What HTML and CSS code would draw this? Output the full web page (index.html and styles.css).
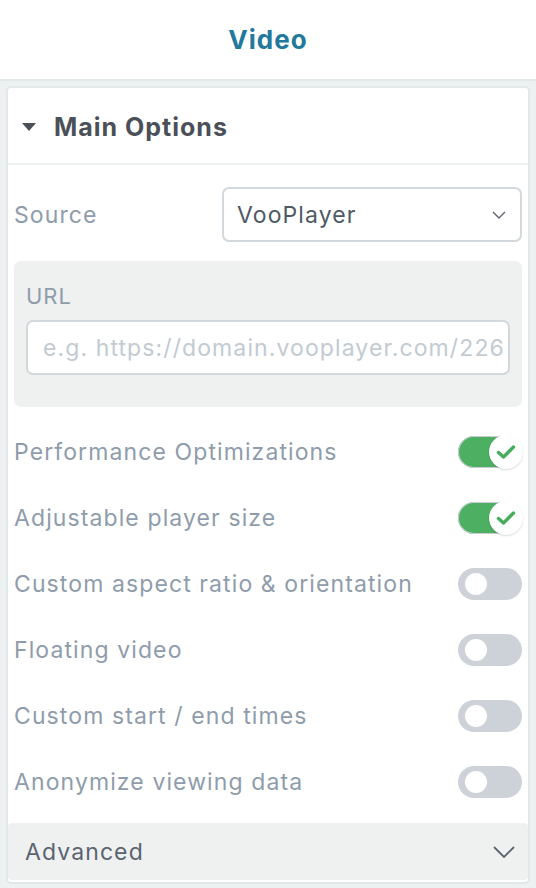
FILE: index.html
```html
<!DOCTYPE html>
<html>
<head>
<meta charset="utf-8">
<link rel="stylesheet" href="styles.css">
</head>
<body>
<div class="page">
  <header class="topbar"><h1 class="title">Video</h1></header>
  <main class="panel">
    <section class="card">
      <div class="card-head">
        <svg class="caret" width="16" height="10" viewBox="0 0 16 10"><path d="M1 1 H15 L8 9 Z" fill="#4b5058"/></svg>
        <h2 class="card-title">Main Options</h2>
      </div>
      <div class="card-body">
        <div class="row source-row">
          <span class="label">Source</span>
          <div class="select">
            <span class="select-value">VooPlayer</span>
            <svg width="14" height="8" viewBox="0 0 14 8"><path d="M1 1 L7 7 L13 1" fill="none" stroke="#5b6470" stroke-width="1.4"/></svg>
          </div>
        </div>
        <div class="url-box">
          <div class="url-label">URL</div>
          <div class="input"><span class="placeholder">e.g. https://domain.vooplayer.com/226</span></div>
        </div>
        <div class="toggles">
          <div class="row toggle-row"><span class="label">Performance Optimizations</span><span class="switch on"><span class="knob"><svg width="20" height="16" viewBox="0 0 20 16"><path d="M2.5 8.5 L7.5 13 L17.5 3" fill="none" stroke="#45ad5c" stroke-width="3.4" stroke-linecap="round" stroke-linejoin="round"/></svg></span></span></div>
          <div class="row toggle-row"><span class="label">Adjustable player size</span><span class="switch on"><span class="knob"><svg width="20" height="16" viewBox="0 0 20 16"><path d="M2.5 8.5 L7.5 13 L17.5 3" fill="none" stroke="#45ad5c" stroke-width="3.4" stroke-linecap="round" stroke-linejoin="round"/></svg></span></span></div>
          <div class="row toggle-row"><span class="label">Custom aspect ratio &amp; orientation</span><span class="switch"><span class="knob"></span></span></div>
          <div class="row toggle-row"><span class="label">Floating video</span><span class="switch"><span class="knob"></span></span></div>
          <div class="row toggle-row"><span class="label">Custom start / end times</span><span class="switch"><span class="knob"></span></span></div>
          <div class="row toggle-row"><span class="label">Anonymize viewing data</span><span class="switch"><span class="knob"></span></span></div>
        </div>
      </div>
      <div class="advanced">
        <span class="adv-label">Advanced</span>
        <svg width="22" height="12" viewBox="0 0 22 12"><path d="M1 1 L11 11 L21 1" fill="none" stroke="#5b6470" stroke-width="1.8"/></svg>
      </div>
    </section>
  </main>
</div>
</body>
</html>
```
FILE: styles.css
```css
* { box-sizing: border-box; }
html, body { margin: 0; padding: 0; }
body {
  font-family: Inter, "Noto Sans", "Liberation Sans", sans-serif;
  background: #eef1f1;
  width: 536px;
  height: 888px;
  overflow: hidden;
}
.topbar {
  height: 81px;
  background: #fff;
  border-bottom: 2px solid #e2e8e8;
  display: flex;
  align-items: center;
  justify-content: center;
}
.title {
  margin: 0;
  font-size: 26px;
  font-weight: 700;
  color: #23799c;
  letter-spacing: 1px;
}
.panel {
  padding: 5px 6px 4px 6px;
}
.card {
  background: #fff;
  border: 2px solid #e2e8e8;
  border-radius: 5px;
  height: 798px;
  display: flex;
  flex-direction: column;
}
.card-head {
  height: 77px;
  display: flex;
  align-items: center;
  gap: 17px;
  padding-left: 13px;
  padding-top: 2px;
  border-bottom: 2px solid #eef1f1;
}
.card-title {
  margin: 0;
  font-size: 25px;
  font-weight: 700;
  color: #4b5058;
  letter-spacing: 1px;
}
.card-body {
  padding: 22px 6px 0 6px;
  flex: 1;
}
.row {
  display: flex;
  align-items: center;
  justify-content: space-between;
}
.label {
  font-size: 23px;
  letter-spacing: 1.1px;
  color: #8e9cab;
}
.source-row { height: 55px; }
.select {
  width: 300px;
  height: 55px;
  border: 2px solid #d3d8dc;
  border-radius: 7px;
  display: flex;
  align-items: center;
  justify-content: space-between;
  padding: 0 14px 0 13px;
}
.select-value {
  font-size: 23px;
  letter-spacing: 1.1px;
  color: #4f5965;
}
.url-box {
  margin-top: 19px;
  background: #eff1f1;
  border-radius: 7px;
  height: 146px;
  padding: 22px 12px 0 12px;
}
.url-label {
  font-size: 22px;
  letter-spacing: 1px;
  color: #8e9cab;
  line-height: 26px;
}
.input {
  margin-top: 11px;
  height: 55px;
  background: #fff;
  border: 2px solid #d3d8dc;
  border-radius: 7px;
  display: flex;
  align-items: center;
  padding-left: 15px;
  overflow: hidden;
  white-space: nowrap;
}
.placeholder {
  font-size: 23px;
  letter-spacing: 1.1px;
  color: #c2cad2;
}
.toggles {
  margin-top: 12px;
}
.toggle-row {
  height: 66px;
}
.switch {
  width: 64px;
  height: 32px;
  border-radius: 16px;
  background: #cdd2d8;
  position: relative;
  flex: none;
}
.switch.on {
  background: #4caf61;
  box-shadow: inset 0 0 0 1px #c9cdd3;
}
.knob {
  position: absolute;
  top: 5px;
  left: 7px;
  width: 22px;
  height: 22px;
  border-radius: 50%;
  background: #fff;
  display: flex;
  align-items: center;
  justify-content: center;
}
.switch.on .knob {
  top: -1px;
  left: auto;
  right: -1px;
  width: 34px;
  height: 34px;
  box-shadow: 0 1px 2px rgba(0,0,0,0.15);
}
.advanced {
  margin: 0 0 2px 0;
  height: 57px;
  background: #eff1f1;
  border-radius: 4px;
  display: flex;
  align-items: center;
  justify-content: space-between;
  padding: 0 13px 0 17px;
}
.adv-label {
  font-size: 23px;
  letter-spacing: 1.1px;
  color: #5a6470;
}
```
